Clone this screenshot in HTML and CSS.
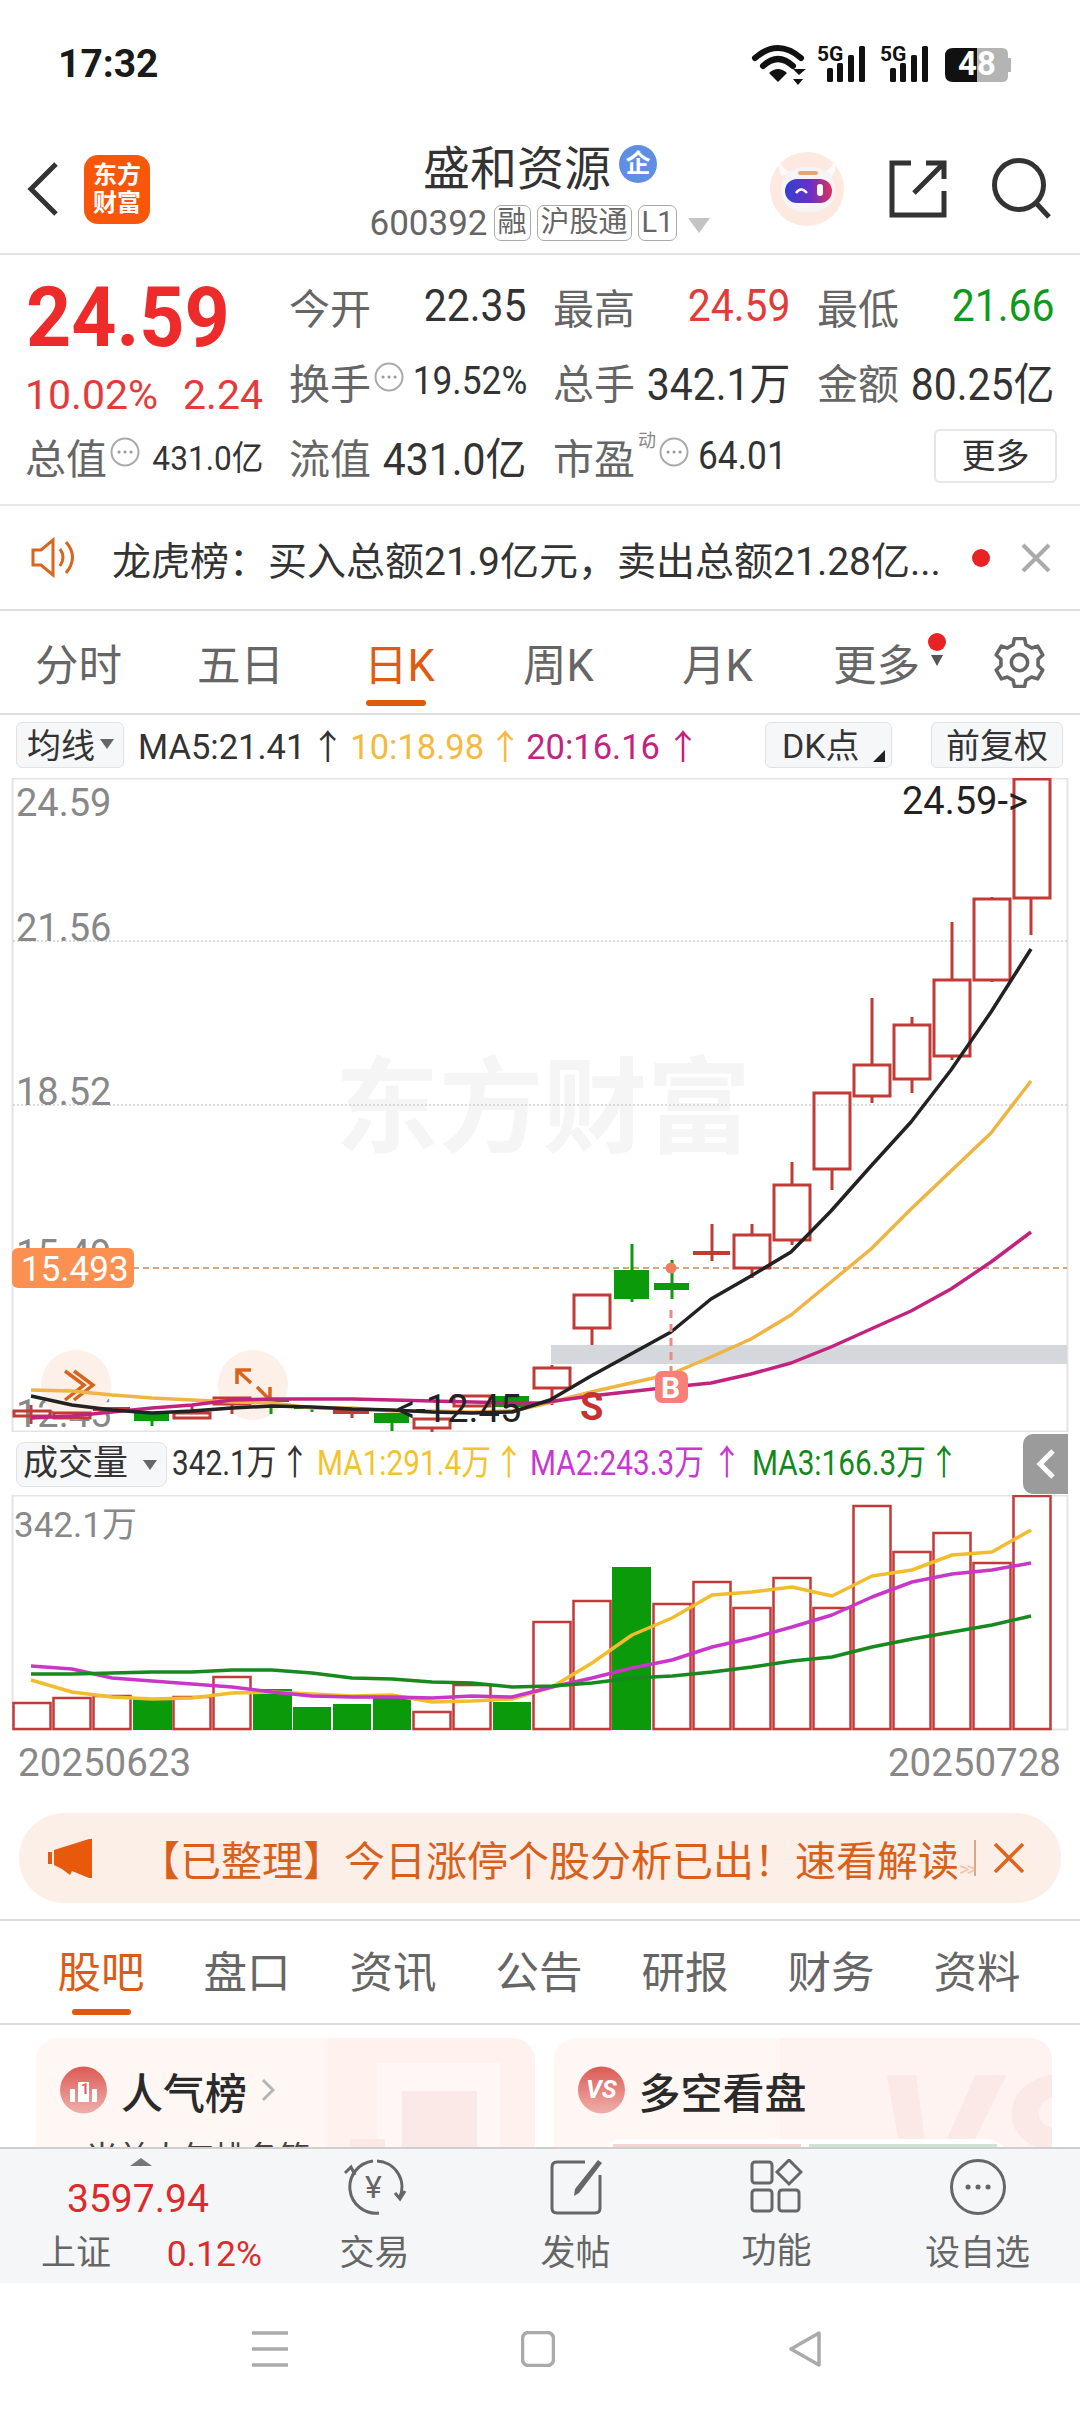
FILE: index.html
```html
<!DOCTYPE html>
<html lang="zh-CN">
<head>
<meta charset="UTF-8">
<meta name="viewport" content="width=device-width, initial-scale=1.0">
<title>盛和资源 600392</title>
<link rel="stylesheet" href="styles.css">
</head>
<body>

<!-- status bar -->
<div class="statusbar">
  <span class="clock">17:32</span>
  <svg class="status-icons" width="265" height="50" viewBox="750 40 265 50">
    <g class="wifi">
      <path d="M755 58 Q778 38 801 58"/>
      <path d="M763 66 Q778 52 793 66"/>
    </g>
    <path class="ink" d="M769 73 Q778 65 787 73 L778 82 Z"/>
    <path class="ink" d="M799 72 L806 66 L793 66 Z M793 76 H803 L798 82 Z" transform="translate(0 3)"/>
    <text class="five-g" x="817" y="61">5G</text>
    <rect class="ink" x="827" y="68" width="6" height="14" rx="1.5"/>
    <rect class="ink" x="837" y="63" width="6" height="19" rx="1.5"/>
    <rect class="ink" x="848" y="55" width="6" height="27" rx="1.5"/>
    <rect class="ink" x="859" y="46" width="6" height="36" rx="1.5"/>
    <text class="five-g" x="880" y="61">5G</text>
    <rect class="ink" x="890" y="68" width="6" height="14" rx="1.5"/>
    <rect class="ink" x="900" y="63" width="6" height="19" rx="1.5"/>
    <rect class="ink" x="911" y="55" width="6" height="27" rx="1.5"/>
    <rect class="ink" x="922" y="46" width="6" height="36" rx="1.5"/>
    <path class="ink" d="M977 48 H953 Q945 48 945 56 V74 Q945 82 953 82 H977 Z"/>
    <path class="batt-rest" d="M977 48 H1002 Q1008 48 1008 54 V58 H1011 V72 H1008 V76 Q1008 82 1002 82 H977 Z"/>
    <text class="batt-num" x="977" y="75">48</text>
  </svg>
</div>

<!-- stock title -->
<header class="head">
  <div class="head-left">
    <svg width="32" height="56" viewBox="0 0 32 56"><path class="stroke-dark" d="M29 3 L4 28 L29 53"/></svg>
    <div class="logo"><span>东方</span><span>财富</span></div>
  </div>
  <div class="head-mid">
    <div class="title">
      <span>盛和资源</span>
      <span class="badge-qi">企</span>
    </div>
    <div class="subtitle">
      <span class="code">600392</span>
      <span class="chip">融</span>
      <span class="chip">沪股通</span>
      <span class="chip">L1</span>
      <span class="tri-down"></span>
    </div>
  </div>
  <div class="head-right">
    <svg width="74" height="74" viewBox="0 0 74 74">
      <defs>
        <linearGradient id="visor" x1="0" x2="1" y1="0" y2="0">
          <stop offset="0" stop-color="#3440d0"/>
          <stop offset=".55" stop-color="#6a2fc8"/>
          <stop offset="1" stop-color="#e0305c"/>
        </linearGradient>
      </defs>
      <circle cx="37" cy="37" r="37" fill="#fde9df"/>
      <path d="M12 24 Q6 15 10 9 Q13 18 21 20 Z M62 24 Q68 15 64 9 Q61 18 53 20 Z" fill="#fbfbfb"/>
      <path d="M11 38 Q11 15 38 15 Q65 15 65 38 Q65 60 38 60 Q11 60 11 38 Z" fill="#f6f4f4"/>
      <rect x="28" y="19" width="20" height="4" rx="2" fill="#e3a677"/>
      <rect x="15" y="27" width="47" height="24" rx="12" fill="url(#visor)"/>
      <path d="M26 41 Q31 34 37 41" fill="none" stroke="#fff" stroke-width="2.5"/>
      <rect x="47" y="32" width="6" height="12" rx="3" fill="#fff"/>
    </svg>
    <svg width="60" height="60" viewBox="0 0 60 60">
      <path class="stroke-dark" d="M23 4 H4 V56 H56 V32"/>
      <path class="stroke-dark" d="M26 34 L55 5 M38 4 H56 V20"/>
    </svg>
    <svg width="60" height="62" viewBox="0 0 60 62">
      <circle class="stroke-dark" cx="27" cy="27" r="24.5"/>
      <path class="stroke-dark" d="M44 45 L57 59"/>
    </svg>
  </div>
</header>

<!-- quote numbers -->
<section class="quote">
  <div class="price">24.59</div>
  <div class="cell"><span class="lbl">今开</span><span class="val">22.35</span></div>
  <div class="cell"><span class="lbl">最高</span><span class="val red">24.59</span></div>
  <div class="cell"><span class="lbl">最低</span><span class="val green">21.66</span></div>

  <div class="change"><span>10.02%</span><span>2.24</span></div>
  <div class="cell">
    <span class="lbl-group"><span class="lbl">换手</span>
      <svg class="info" width="30" height="30" viewBox="0 0 30 30"><circle cx="15" cy="15" r="13.5"/><path d="M9 15h.1M15 15h.1M21 15h.1"/></svg></span>
    <span class="val mid">19.52%</span>
  </div>
  <div class="cell"><span class="lbl">总手</span><span class="val">342.1万</span></div>
  <div class="cell"><span class="lbl">金额</span><span class="val">80.25亿</span></div>

  <div class="cell">
    <span class="lbl-group"><span class="lbl">总值</span>
      <svg class="info" width="30" height="30" viewBox="0 0 30 30"><circle cx="15" cy="15" r="13.5"/><path d="M9 15h.1M15 15h.1M21 15h.1"/></svg></span>
    <span class="val small">431.0亿</span>
  </div>
  <div class="cell"><span class="lbl">流值</span><span class="val">431.0亿</span></div>
  <div class="cell pe">
    <span class="lbl-group"><span class="lbl">市盈</span><sup class="dyn">动</sup>
      <svg class="info" width="30" height="30" viewBox="0 0 30 30"><circle cx="15" cy="15" r="13.5"/><path d="M9 15h.1M15 15h.1M21 15h.1"/></svg></span>
    <span class="val mid">64.01</span>
  </div>
  <div class="cell end"><span class="more-btn">更多</span></div>
</section>

<!-- longhubang notice -->
<section class="notice">
  <svg width="48" height="41" viewBox="0 0 48 41">
    <path class="stroke-orange" d="M2 13 H10 L22 3 V38 L10 28 H2 Z"/>
    <path class="stroke-orange" d="M29 12 Q35 20 29 29 M35 5 Q48 20 35 36"/>
  </svg>
  <span class="notice-text">龙虎榜：买入总额21.9亿元，卖出总额21.28亿...</span>
  <span class="red-dot"></span>
  <svg class="notice-close" width="30" height="30" viewBox="0 0 30 30"><path class="stroke-grey" d="M2 2 L28 28 M28 2 L2 28"/></svg>
</section>

<!-- chart period tabs -->
<nav class="periods">
  <span class="period">分时</span>
  <span class="period">五日</span>
  <span class="period on">日K</span>
  <span class="period">周K</span>
  <span class="period">月K</span>
  <span class="period more">更多<i class="more-dot"></i><i class="more-tri"></i></span>
  <svg class="gear" width="51" height="51" viewBox="0 0 50 50">
    <path d="M20 1.5 L30 1.5 L31.3 7.6 L36.9 10.8 L42.8 8.9 L47.8 17.6 L43.2 21.8 L43.2 28.2 L47.8 32.4 L42.8 41.1 L36.9 39.2 L31.3 42.4 L30 48.5 L20 48.5 L18.7 42.4 L13.1 39.2 L7.2 41.1 L2.2 32.4 L6.8 28.2 L6.8 21.8 L2.2 17.6 L7.2 8.9 L13.1 10.8 L18.7 7.6 Z"/>
    <circle cx="25" cy="25" r="8"/>
  </svg>
</nav>

<!-- moving average legend -->
<div class="ma-row">
  <span class="pick pick-ma">均线<i class="pick-tri"></i></span>
  <span class="ma-item w-ma5">MA5:21.41</span><span class="arrow a-first">↑</span>
  <span class="ma-item c-yellow">10:18.98</span><span class="arrow a-second c-yellow">↑</span>
  <span class="ma-item c-pink">20:16.16</span><span class="arrow a-third c-pink">↑</span>
  <span class="pick pick-dk">DK点<i class="corner"></i></span>
  <span class="pick pick-fq">前复权</span>
</div>

<!-- k line chart, coordinates are page pixels -->
<svg class="chart" width="1080" height="654" viewBox="0 778 1080 654">
  <text class="watermark" x="335" y="1145">东方财富</text>
  <rect class="frame" x="12.5" y="778.5" width="1055" height="653"/>
  <path class="grid" d="M13 941 H1067 M13 1105 H1067"/>
  <path class="price-line" d="M13 1268 H1067"/>
  <rect class="band" x="551" y="1345" width="516" height="19"/>

  <text class="axis" x="16" y="816">24.59</text>
  <text class="axis" x="16" y="941">21.56</text>
  <text class="axis" x="16" y="1105">18.52</text>
  <text class="axis" x="16" y="1267">15.49</text>
  <text class="axis" x="16" y="1427">12.45</text>

  <circle class="tool-bg" cx="76" cy="1385" r="35"/>
  <circle class="tool-bg" cx="253" cy="1385" r="35"/>
  <path class="tool" d="M65 1371 L84 1385 L65 1400 M74 1371 L93 1385 L74 1400"/>
  <path class="tool" d="M237 1384 V1370 H251 M238 1371 L251 1383 M257 1387 L270 1400 M270 1387 V1400 H256"/>

  <!-- wicks -->
  <g class="wick-up">
    <path d="M31 1405 V1424"/>
    <path d="M192 1405 V1413"/>
    <path d="M232 1405 V1414"/>
    <path d="M352 1412 V1418"/>
    <path d="M432 1428 V1432"/>
    <path d="M552 1365 V1368 M552 1389 V1405"/>
    <path d="M592 1328 V1345"/>
    <path d="M712 1224 V1261"/>
    <path d="M752 1224 V1235 M752 1268 V1278"/>
    <path d="M792 1162 V1185 M792 1241 V1245"/>
    <path d="M832 1169 V1190"/>
    <path d="M872 998 V1065 M872 1096 V1103"/>
    <path d="M912 1017 V1025 M912 1079 V1093"/>
    <path d="M952 922 V980 M952 1056 V1060"/>
    <path d="M992 897 V899 M992 980 V982"/>
    <path d="M1031 898 V935"/>
  </g>
  <g class="wick-dn">
    <path d="M152 1421 V1426"/>
    <path d="M271 1400 V1414"/>
    <path d="M312 1407 V1412"/>
    <path d="M392 1423 V1431"/>
    <path d="M632 1244 V1270 M632 1299 V1302"/>
    <path d="M672 1260 V1299"/>
  </g>

  <!-- bodies -->
  <g class="up">
    <rect x="14" y="1411" width="36" height="5"/>
    <rect x="54" y="1413" width="36" height="5"/>
    <rect x="214" y="1398" width="36" height="6"/>
    <rect x="174" y="1413" width="36" height="5"/>
    <rect x="414" y="1419" width="36" height="9"/>
    <rect x="454" y="1396" width="36" height="10"/>
    <rect x="534" y="1368" width="36" height="20"/>
    <rect x="574" y="1295" width="36" height="33"/>
    <rect x="734" y="1235" width="36" height="33"/>
    <rect x="774" y="1185" width="36" height="55"/>
    <rect x="814" y="1093" width="36" height="76"/>
    <rect x="854" y="1065" width="36" height="31"/>
    <rect x="894" y="1025" width="36" height="54"/>
    <rect x="934" y="980" width="36" height="76"/>
    <rect x="974" y="899" width="36" height="81"/>
    <rect x="1014" y="779" width="36" height="119"/>
  </g>
  <g class="doji-up">
    <path d="M93 1409 H130"/>
    <path d="M333 1412 H369"/>
    <path d="M693 1253 H730"/>
  </g>
  <g class="dn">
    <rect x="134" y="1413" width="35" height="8"/>
    <rect x="374" y="1413" width="35" height="10"/>
    <rect x="492" y="1396" width="37" height="11"/>
    <rect x="614" y="1270" width="35" height="29"/>
    <rect x="654" y="1283" width="35" height="7"/>
    <rect x="255" y="1399" width="34" height="3"/>
    <rect x="294" y="1406" width="35" height="3"/>
  </g>

  <!-- moving averages -->
  <polyline class="ma c-ma10" points="31,1390 72,1391 112,1395 152,1398 192,1400 232,1402 272,1403 312,1408 352,1408 392,1411 432,1411 472,1412 512,1411 540,1405 591,1392 631,1383 671,1374 711,1357 751,1339 791,1315 831,1282 871,1249 911,1209 951,1171 991,1133 1031,1081"/>
  <polyline class="ma c-ma20" points="31,1418 72,1416 112,1412 152,1408 192,1405 232,1400 272,1399 312,1399 352,1399 392,1400 432,1401 472,1402 512,1403 540,1403 591,1396 671,1387 711,1383 751,1374 791,1363 831,1347 871,1329 911,1311 951,1289 991,1262 1031,1232"/>
  <polyline class="ma c-ma5" points="31,1396 72,1405 112,1410 152,1413 192,1411 232,1408 272,1406 312,1407 352,1409 392,1410 432,1412 472,1413 512,1412 550,1400 591,1376 631,1354 671,1332 711,1299 751,1276 791,1252 831,1211 871,1166 911,1122 951,1070 991,1012 1031,949"/>

  <text class="note" x="902" y="814">24.59-&gt;</text>
  <text class="note" x="396" y="1422">&lt;-12.45</text>

  <rect class="tag" x="12" y="1248" width="122" height="40" rx="6"/>
  <text class="tag-text" x="21" y="1281">15.493</text>

  <circle class="dot" cx="671" cy="1268" r="5.5"/>
  <path class="buy-line" d="M671 1310 V1371"/>
  <text class="sell" x="580" y="1420">S</text>
  <rect class="buy" x="655" y="1371" width="33" height="32" rx="7"/>
  <text class="buy-text" x="661" y="1398">B</text>
</svg>

<!-- volume legend -->
<div class="vol-row">
  <span class="pick pick-vol">成交量<i class="pick-tri"></i></span>
  <span class="squeeze w-a"><b>342.1万</b></span><span class="squeeze w-arrow-a"><b>↑</b></span>
  <span class="squeeze w-b c-y2"><b>MA1:291.4万</b></span><span class="squeeze w-arrow-b c-y2"><b>↑</b></span>
  <span class="squeeze w-c c-p2"><b>MA2:243.3万</b></span><span class="squeeze w-arrow-c c-p2"><b>↑</b></span>
  <span class="squeeze w-b c-g2"><b>MA3:166.3万</b></span><span class="squeeze w-arrow-b c-g2"><b>↑</b></span>
  <div class="collapse">
    <svg width="20" height="32" viewBox="0 0 20 32"><path d="M17 3 L4 16 L17 29"/></svg>
  </div>
</div>

<!-- volume chart -->
<svg class="chart" width="1080" height="236" viewBox="0 1495 1080 236">
  <rect class="frame" x="12.5" y="1495.5" width="1055" height="234"/>
  <text class="axis-vol" x="14" y="1537">342.1万</text>
  <g class="vol-up">
    <rect x="13.5" y="1703" width="37" height="26"/>
    <rect x="53.5" y="1698" width="37" height="31"/>
    <rect x="93.5" y="1696" width="37" height="33"/>
    <rect x="173.5" y="1697" width="37" height="32"/>
    <rect x="213.5" y="1677" width="37" height="52"/>
    <rect x="413.5" y="1712" width="37" height="17"/>
    <rect x="453.5" y="1685" width="37" height="44"/>
    <rect x="533.5" y="1622" width="37" height="107"/>
    <rect x="573.5" y="1601" width="37" height="128"/>
    <rect x="653.5" y="1604" width="37" height="125"/>
    <rect x="693.5" y="1582" width="37" height="147"/>
    <rect x="733.5" y="1608" width="37" height="121"/>
    <rect x="773.5" y="1578" width="37" height="151"/>
    <rect x="813.5" y="1608" width="37" height="121"/>
    <rect x="853.5" y="1506" width="37" height="223"/>
    <rect x="893.5" y="1552" width="37" height="177"/>
    <rect x="933.5" y="1533" width="37" height="196"/>
    <rect x="973.5" y="1563" width="37" height="166"/>
    <rect x="1013.5" y="1496" width="37" height="233"/>
  </g>
  <g class="vol-dn">
    <rect x="133" y="1699" width="39" height="31"/>
    <rect x="253" y="1689" width="39" height="41"/>
    <rect x="293" y="1707" width="38" height="23"/>
    <rect x="333" y="1704" width="38" height="26"/>
    <rect x="373" y="1698" width="38" height="32"/>
    <rect x="493" y="1702" width="38" height="28"/>
    <rect x="612" y="1567" width="39" height="163"/>
  </g>
  <polyline class="vma c-y2s" points="31,1680 72,1692 112,1697 152,1699 192,1698 232,1693 272,1692 312,1694 352,1696 392,1695 432,1702 472,1701 512,1699 552,1687 592,1663 632,1635 672,1618 712,1595 752,1592 792,1587 832,1596 872,1576 912,1570 952,1555 992,1552 1031,1530"/>
  <polyline class="vma c-p2s" points="31,1666 72,1669 112,1678 152,1681 192,1684 232,1687 272,1692 312,1696 352,1697 392,1697 432,1698 472,1696 512,1697 552,1687 592,1678 632,1668 672,1660 712,1647 752,1638 792,1627 832,1615 872,1597 912,1582 952,1574 992,1570 1031,1563"/>
  <polyline class="vma c-g2s" points="31,1674 72,1674 112,1673 152,1672 192,1672 232,1670 272,1670 312,1673 352,1678 392,1679 432,1682 472,1683 512,1687 552,1686 592,1683 632,1678 672,1676 712,1672 752,1667 792,1661 832,1657 872,1647 912,1639 952,1632 992,1625 1031,1616"/>
</svg>

<div class="dates"><span>20250623</span><span>20250728</span></div>

<!-- promo banner -->
<div class="promo">
  <svg width="45" height="39" viewBox="0 0 45 39">
    <path d="M0 13 H4 V25 H0 Z M6 11 L41 0 H44 V39 H41 L24 32 L22 36 L14 30 L6 26 Z"/>
  </svg>
  <span class="promo-text">【已整理】今日涨停个股分析已出！速看解读<i class="promo-fade">&gt;&gt;</i></span>
  <span class="promo-sep"></span>
  <svg class="promo-close" width="32" height="30" viewBox="0 0 32 30"><path d="M2 1 L30 29 M30 1 L2 29"/></svg>
</div>

<!-- content tabs -->
<nav class="subtabs">
  <span class="subtab on">股吧</span>
  <span class="subtab">盘口</span>
  <span class="subtab">资讯</span>
  <span class="subtab">公告</span>
  <span class="subtab">研报</span>
  <span class="subtab">财务</span>
  <span class="subtab">资料</span>
</nav>

<!-- cards, cut off by the toolbar -->
<section class="cards">
  <div class="card">
    <i class="deco deco-a"></i><i class="deco deco-b"></i><i class="deco deco-c"></i><i class="deco deco-d"></i>
    <div class="card-head">
      <svg width="47" height="48" viewBox="0 0 47 48">
        <defs>
          <linearGradient id="badge" x1="0" x2="0" y1="0" y2="1">
            <stop offset="0" stop-color="#db5a54"/>
            <stop offset="1" stop-color="#f0afab"/>
          </linearGradient>
        </defs>
        <circle cx="23.5" cy="24" r="23.5" fill="url(#badge)"/>
        <path d="M10 23 H15 V36 H10 Z M18 16 H29 V36 H18 Z M32 23 H37 V36 H32 Z" fill="#fff"/>
        <text class="medal" x="21" y="28">1</text>
      </svg>
      <span class="card-title">人气榜</span>
      <svg width="14" height="24" viewBox="0 0 14 24"><path class="chev" d="M2 2 L12 12 L2 22"/></svg>
    </div>
    <div class="card-sub">当前人气排名第一</div>
  </div>
  <div class="card">
    <i class="deco deco-a vs-a"></i><span class="vs-mark">VS</span>
    <div class="card-head">
      <svg width="47" height="48" viewBox="0 0 47 48">
        <circle cx="23.5" cy="24" r="23.5" fill="url(#badge)"/>
        <text class="vs-icon" x="8" y="32">VS</text>
      </svg>
      <span class="card-title">多空看盘</span>
    </div>
    <div class="versus"><i class="bar-red"></i><i class="bar-green"></i></div>
  </div>
</section>

<!-- bottom toolbar -->
<footer class="toolbar">
  <div class="index">
    <i class="index-tri"></i>
    <span class="index-val">3597.94</span>
    <div class="index-row"><span class="index-name">上证</span><span class="index-pct">0.12%</span></div>
  </div>
  <div class="tool-item">
    <svg width="64" height="56" viewBox="0 0 64 56">
      <path class="icon-line" d="M30 2 A26 26 0 0 0 36 54 M2 14 L8 8 L12 16"/>
      <path class="icon-line" d="M34 2 A26 26 0 0 1 56 40 M62 32 L57 40 L52 34"/>
      <text class="yen" x="22" y="39">¥</text>
    </svg>
    <span>交易</span>
  </div>
  <div class="tool-item">
    <svg width="54" height="56" viewBox="0 0 54 56">
      <path class="icon-line" d="M36 3 H8 Q3 3 3 8 V49 Q3 54 8 54 H46 Q51 54 51 49 V16"/>
      <path class="pencil" d="M49 1 L53 4 L30 34 L25 37 L26 30 Z"/>
    </svg>
    <span>发帖</span>
  </div>
  <div class="tool-item">
    <svg width="53" height="54" viewBox="0 0 53 54">
      <rect class="icon-line" x="2" y="3" width="20" height="21" rx="3"/>
      <path class="icon-line" d="M39 1 L51 13 L39 25 L27 13 Z"/>
      <rect class="icon-line" x="2" y="31" width="20" height="21" rx="3"/>
      <rect class="icon-line" x="29" y="31" width="20" height="21" rx="3"/>
    </svg>
    <span>功能</span>
  </div>
  <div class="tool-item">
    <svg width="56" height="56" viewBox="0 0 56 56">
      <circle class="icon-line" cx="28" cy="28" r="26.5"/>
      <path class="icon-dots" d="M18 28h.1M28 28h.1M38 28h.1"/>
    </svg>
    <span>设自选</span>
  </div>
</footer>

<!-- android nav -->
<div class="navbar">
  <svg width="36" height="36" viewBox="0 0 36 36"><path class="nav-line" d="M0 2 H36 M0 18 H36 M0 34 H36"/></svg>
  <svg width="34" height="36" viewBox="0 0 34 36"><rect class="nav-line" x="1.5" y="1.5" width="31" height="33" rx="6"/></svg>
  <svg width="34" height="36" viewBox="0 0 34 36"><path class="nav-line" d="M31 2 V34 L3 18 Z"/></svg>
</div>

</body>
</html>
```

FILE: styles.css
```css
* {
  box-sizing: border-box;
}

html, body {
  margin: 0;
  padding: 0;
}

body {
  width: 1080px;
  height: 2414px;
  overflow: hidden;
  background-color: #fff;
  color: #333;
  font-family: Roboto, "Noto Sans CJK SC", sans-serif;
}

i {
  font-style: normal;
}

svg {
  display: block;
  flex: none;
}

/* status bar */
.statusbar {
  height: 130px;
  display: flex;
  justify-content: space-between;
  align-items: flex-start;
  padding: 41px 65px 0 58px;
}

.status-icons {
  margin-top: -1px;
}

.clock {
  font-size: 39px;
  line-height: 46px;
  font-weight: 700;
  color: #1a1a1a;
}

.ink { fill: #111; }
.wifi path { fill: none; stroke: #111; stroke-width: 6; stroke-linecap: round; }
.five-g { font-size: 21px; font-weight: 700; fill: #111; }
.batt-rest { fill: #b4b4b4; }
.batt-num { font-size: 33px; font-weight: 700; fill: #fff; text-anchor: middle; }

/* head */
.head {
  height: 125px;
  display: grid;
  grid-template-columns: 1fr auto 1fr;
  border-bottom: 2px solid #e2e2e2;
}

.head-left,
.head-right {
  height: 118px;
  display: flex;
  align-items: center;
}

.head-left {
  padding-left: 27px;
  gap: 25px;
}

.head-right {
  justify-content: flex-end;
  padding-right: 28px;
  gap: 44px;
}

.stroke-dark {
  fill: none;
  stroke: #333;
  stroke-width: 5;
}

.logo {
  width: 66px;
  height: 69px;
  border-radius: 14px;
  background-color: #f8570b;
  color: #fff;
  font-size: 24px;
  line-height: 28px;
  font-weight: 700;
  display: flex;
  flex-direction: column;
  align-items: center;
  justify-content: center;
}

.title {
  display: flex;
  align-items: center;
  justify-content: center;
  gap: 8px;
  height: 68px;
  font-size: 47px;
  color: #333;
}

.badge-qi {
  width: 38px;
  height: 38px;
  border-radius: 50%;
  background-color: #5f8fe2;
  color: #fff;
  font-size: 25px;
  font-weight: 700;
  text-align: center;
  line-height: 38px;
}

.subtitle {
  display: flex;
  align-items: center;
  height: 36px;
  margin-top: 7px;
  color: #666;
}

.code {
  font-size: 35px;
  margin-right: 6px;
}

.chip {
  height: 36px;
  line-height: 32px;
  padding: 0 3px;
  margin-right: 6px;
  border: 1.5px solid #aaa;
  border-radius: 7px;
  font-size: 29px;
}

.tri-down {
  width: 0;
  height: 0;
  margin: 4px 0 0 5px;
  border-left: 11px solid transparent;
  border-right: 11px solid transparent;
  border-top: 15px solid #c4c4c4;
}

/* quote */
.quote {
  height: 251px;
  padding: 13px 26px 0;
  display: grid;
  grid-template-columns: repeat(4, 237px);
  grid-auto-rows: 75px;
  column-gap: 27px;
  border-bottom: 2px solid #e8e8e8;
}

.price {
  font-size: 83px;
  line-height: 64px;
  margin-top: 18px;
  font-weight: 700;
  color: #ee2b2b;
  transform: scaleX(.95);
  transform-origin: left center;
  white-space: nowrap;
}

.change {
  display: flex;
  justify-content: space-between;
  font-size: 41px;
  line-height: 50px;
  margin-top: 27px;
  margin-left: -1px;
  color: #e63a3a;
}

.cell {
  display: flex;
  align-items: center;
  justify-content: space-between;
}

.cell.pe {
  justify-content: flex-start;
}

.cell.end {
  justify-content: flex-end;
}

.pe .lbl-group {
  margin-right: 9px;
}

.lbl-group {
  display: flex;
  flex: none;
  align-items: center;
}

.lbl {
  flex: none;
  margin-left: -1px;
  font-size: 41px;
  white-space: nowrap;
  color: #666;
}

.val {
  flex: none;
  font-size: 44px;
  color: #333;
  white-space: nowrap;
  transform: scaleX(.93);
  transform-origin: right center;
}

.val.mid { font-size: 38px; }
.val.small { font-size: 34px; }
.pe .val { transform-origin: left center; }
.red { color: #e33a3a; }
.green { color: #0e9a1a; }

.info {
  margin: -8px 0 0 3px;
}

.info circle {
  fill: none;
  stroke: #aaa;
  stroke-width: 2;
}

.info path {
  fill: none;
  stroke: #999;
  stroke-width: 3;
  stroke-linecap: round;
}

.dyn {
  font-size: 18px;
  line-height: 18px;
  color: #888;
  margin: -30px 0 0 3px;
}

.more-btn {
  width: 123px;
  height: 54px;
  margin-right: -2px;
  border: 2px solid #e6e6e6;
  border-radius: 6px;
  font-size: 34px;
  line-height: 50px;
  text-align: center;
  color: #333;
}

/* notice */
.notice {
  height: 105px;
  display: flex;
  align-items: center;
  padding-left: 31px;
  border-bottom: 2px solid #dedede;
}

.stroke-orange {
  fill: none;
  stroke: #d9651f;
  stroke-width: 3;
}

.stroke-grey {
  fill: none;
  stroke: #aaa;
  stroke-width: 4;
}

.notice-text {
  width: 860px;
  margin-left: 33px;
  font-size: 39px;
  white-space: nowrap;
  overflow: hidden;
  color: #333;
}

.red-dot {
  width: 18px;
  height: 18px;
  border-radius: 50%;
  background-color: #e82323;
}

.notice-close {
  margin-left: 31px;
}

/* period tabs */
.periods {
  height: 104px;
  position: relative;
  display: flex;
  align-items: center;
  padding-left: 2px;
  border-bottom: 2px solid #dedede;
}

.period {
  width: 159px;
  text-align: center;
  font-size: 43.5px;
  color: #666;
  position: relative;
}

.period:first-child {
  margin-left: -3px;
  margin-right: 3px;
}

.period.on {
  color: #dd5c14;
}

.period.on::after {
  content: "";
  position: absolute;
  left: 46px;
  bottom: -12px;
  width: 60px;
  height: 6px;
  border-radius: 3px;
  background-color: #e0590c;
}

.more-dot {
  position: absolute;
  top: 2px;
  right: 10px;
  width: 18px;
  height: 18px;
  border-radius: 50%;
  background-color: #e82323;
}

.more-tri {
  position: absolute;
  top: 24px;
  right: 13px;
  width: 0;
  height: 0;
  border-left: 6px solid transparent;
  border-right: 6px solid transparent;
  border-top: 11px solid #555;
}

.gear {
  margin-left: 38px;
}

.gear path,
.gear circle {
  fill: none;
  stroke: #666;
  stroke-width: 3.5;
  stroke-linejoin: round;
}

/* ma legend */
.ma-row {
  height: 63px;
  padding-top: 7px;
  display: flex;
  align-items: flex-start;
  font-size: 34.5px;
  line-height: 50px;
}

.pick {
  position: relative;
  height: 46px;
  border: 1.5px solid #e2e2e2;
  border-radius: 6px;
  background-color: #f6f7f9;
  color: #333;
  font-size: 34px;
  line-height: 46px;
  white-space: nowrap;
}

.pick-ma {
  width: 108px;
  margin-left: 16px;
  padding-left: 10px;
}

.pick-dk {
  width: 127px;
  margin-left: 59px;
  padding-left: 16px;
}

.pick-fq {
  width: 132px;
  margin-left: 39px;
  padding-left: 14px;
}

.pick-tri {
  position: absolute;
  right: 9px;
  top: 16px;
  width: 0;
  height: 0;
  border-left: 7px solid transparent;
  border-right: 7px solid transparent;
  border-top: 10px solid #666;
}

.corner {
  position: absolute;
  right: 6px;
  bottom: 5px;
  width: 0;
  height: 0;
  border-left: 12px solid transparent;
  border-bottom: 12px solid #222;
}

.ma-item {
  white-space: nowrap;
}

.w-ma5 {
  margin-left: 14px;
}

.arrow {
  text-align: center;
}

.a-first {
  width: 45px;
}

.a-second {
  width: 42px;
}

.a-third {
  width: 46px;
}

.c-yellow { color: #f4b93f; }
.c-pink { color: #c2237f; }

/* charts */
.chart {
  display: block;
}

.watermark {
  font-size: 104px;
  font-weight: 700;
  fill: #f5f5f5;
  font-family: "Noto Sans CJK SC", sans-serif;
}

.frame {
  fill: none;
  stroke: #e4e4e4;
  stroke-width: 2;
}

.grid {
  fill: none;
  stroke: #cfcfcf;
  stroke-width: 1.5;
  stroke-dasharray: 2 2;
}

.price-line {
  fill: none;
  stroke: #dba57c;
  stroke-width: 2;
  stroke-dasharray: 6 4;
}

.band { fill: #d4d7db; }
.axis { font-size: 38px; fill: #888; }
.note { font-size: 38px; fill: #222; }

.tool-bg { fill: #fdf0e8; }

.tool {
  fill: none;
  stroke: #d8641c;
  stroke-width: 3.5;
}

.wick-up path {
  fill: none;
  stroke: #c23a36;
  stroke-width: 3;
}

.wick-dn path {
  fill: none;
  stroke: #0a9a0a;
  stroke-width: 3;
}

.up rect {
  fill: none;
  stroke: #c23a36;
  stroke-width: 3;
}

.doji-up path {
  fill: none;
  stroke: #c23a36;
  stroke-width: 4;
}

.dn rect { fill: #0a9a0a; }

.ma {
  fill: none;
  stroke-width: 3.5;
  stroke-linejoin: round;
}

.c-ma5 { stroke: #222; }
.c-ma10 { stroke: #eeb444; }
.c-ma20 { stroke: #c2237f; }

.tag { fill: #fb9050; }
.tag-text { font-size: 35px; fill: #fff; }
.dot { fill: #ee7f5c; }

.buy-line {
  fill: none;
  stroke: #ee8a82;
  stroke-width: 3;
  stroke-dasharray: 8 6;
}

.sell { font-size: 38px; font-weight: 700; fill: #c93030; }
.buy { fill: #f98078; }
.buy-text { font-size: 30px; font-weight: 700; fill: #fff; }

/* volume legend */
.vol-row {
  position: relative;
  height: 63px;
  padding-top: 10px;
  display: flex;
  align-items: flex-start;
  line-height: 44px;
}

.pick-vol {
  width: 151px;
  height: 45px;
  margin-left: 16px;
  margin-right: 5px;
  padding-left: 6px;
  font-size: 35px;
  line-height: 41px;
  border-radius: 8px;
}

.vol-row .pick-tri {
  right: 9px;
  top: 17px;
}

.squeeze {
  display: block;
  font-size: 35px;
  height: 44px;
}

.squeeze b {
  display: block;
  font-weight: 400;
  white-space: nowrap;
  transform: scaleX(.85);
  transform-origin: left center;
}

.w-a { width: 108px; }
.w-b { width: 176.5px; }
.w-c { width: 181.5px; }
.w-arrow-a { width: 37px; }
.w-arrow-b { width: 36.5px; }
.w-arrow-c { width: 40.5px; }

.c-y2 { color: #f2c32c; }
.c-p2 { color: #c837d0; }
.c-g2 { color: #12881c; }

.collapse {
  position: absolute;
  top: 2px;
  right: 12px;
  width: 45px;
  height: 60px;
  border-radius: 10px 0 0 10px;
  background-color: #9b9b9b;
  display: flex;
  align-items: center;
  justify-content: center;
}

.collapse path {
  fill: none;
  stroke: #fff;
  stroke-width: 5;
}

.axis-vol { font-size: 35px; fill: #888; }
.vol-up rect { fill: #fff; stroke: #c23a3a; stroke-width: 2.5; }
.vol-dn rect { fill: #0a9a0a; }

.vma {
  fill: none;
  stroke-width: 3.5;
  stroke-linejoin: round;
}

.c-y2s { stroke: #f2bd2c; }
.c-p2s { stroke: #c837c8; }
.c-g2s { stroke: #17891f; }

.dates {
  height: 64px;
  margin-bottom: 18px;
  padding: 0 19px 0 18px;
  display: flex;
  justify-content: space-between;
  font-size: 38.5px;
  line-height: 64px;
  color: #888;
}

/* promo */
.promo {
  width: 1042px;
  height: 90px;
  margin-left: 19px;
  padding-left: 29px;
  display: flex;
  align-items: center;
  border-radius: 45px;
  background-color: #fcefe7;
}

.promo svg path {
  fill: #e8590c;
}

.promo-text {
  width: 835px;
  margin-left: 46px;
  font-size: 41px;
  color: #d9601b;
  white-space: nowrap;
  overflow: hidden;
}

.promo-fade {
  font-size: 20px;
  letter-spacing: -3px;
  color: #f2c4aa;
}

.promo-sep {
  width: 1.5px;
  height: 36px;
  background-color: #d9a98d;
}

.promo-close {
  margin-left: 17px;
}

.promo .promo-close path {
  fill: none;
  stroke: #e0641c;
  stroke-width: 3.5;
}

/* content tabs */
.subtabs {
  height: 106px;
  margin-top: 16px;
  padding-left: 28px;
  display: flex;
  align-items: center;
  border-top: 2px solid #dedede;
  border-bottom: 2px solid #dedede;
}

.subtab {
  position: relative;
  width: 146px;
  text-align: center;
  font-size: 43.5px;
  line-height: 62px;
  margin-top: 3px;
  color: #666;
}

.subtab.on {
  color: #dd5c14;
}

.subtab.on::after {
  content: "";
  position: absolute;
  left: 44px;
  bottom: -10px;
  width: 59px;
  height: 6px;
  border-radius: 3px;
  background-color: #e0590c;
}

/* cards */
.cards {
  height: 122px;
  overflow: hidden;
  padding: 13px 28px 0 36px;
  display: flex;
  gap: 19px;
}

.card {
  position: relative;
  flex: 1;
  height: 300px;
  padding: 28px 24px 0;
  border-radius: 22px;
  overflow: hidden;
  background-color: #fef7f4;
}

.card-head {
  position: relative;
  height: 48px;
  display: flex;
  align-items: center;
  gap: 14px;
}

.card-title {
  font-size: 42px;
  font-weight: 500;
  color: #2a2a2a;
}

.chev {
  fill: none;
  stroke: #b5b5b5;
  stroke-width: 3;
}

.medal {
  font-size: 14px;
  font-weight: 700;
  fill: #d9605b;
}

.vs-icon {
  font-size: 25px;
  font-weight: 700;
  font-style: italic;
  fill: #fff;
}

.card-sub {
  position: relative;
  margin: 22px 0 0 26px;
  font-size: 32px;
  line-height: 44px;
  color: #444;
  white-space: nowrap;
}

.deco {
  position: absolute;
}

.deco-a {
  left: 291px;
  right: 0;
  top: 0;
  bottom: 0;
  background-color: #fef1ee;
}

.deco-b {
  left: 341px;
  width: 123px;
  top: 25px;
  bottom: 0;
  background-color: #fef7f5;
}

.deco-c {
  left: 366px;
  width: 75px;
  top: 53px;
  bottom: 0;
  background-color: #fae9e6;
}

.deco-d {
  left: 314px;
  width: 35px;
  top: 101px;
  bottom: 0;
  background-color: #fbe9e6;
}

.vs-a {
  left: 226px;
  background-color: #fef3f0;
}

.vs-mark {
  position: absolute;
  left: 320px;
  top: 13px;
  font-size: 190px;
  line-height: 190px;
  font-weight: 700;
  font-style: italic;
  color: #fae9e6;
}

.versus {
  position: absolute;
  left: 49px;
  top: 101px;
  width: 404px;
  height: 80px;
  padding: 5px 10px;
  display: flex;
  gap: 8px;
  border-radius: 20px;
  background-color: #fff;
}

.bar-red {
  flex: 1;
  background-color: #f3d5d3;
}

.bar-green {
  flex: 1;
  background-color: #cfe5d3;
}

/* toolbar */
.toolbar {
  height: 136px;
  position: relative;
  display: flex;
  border-top: 2px solid #cfcfcf;
  background-color: #f5f6f8;
}

.index {
  width: 274px;
  padding: 9px 0 0 41px;
  display: flex;
  flex-direction: column;
}

.index-tri {
  width: 0;
  height: 0;
  align-self: center;
  margin-left: -34px;
  border-left: 11px solid transparent;
  border-right: 11px solid transparent;
  border-bottom: 8px solid #777;
}

.index-val {
  margin: 10px 0 0 26px;
  font-size: 39px;
  line-height: 46px;
  color: #dc2b2b;
}

.index-row {
  display: flex;
  align-items: center;
  justify-content: space-between;
  margin-top: 7px;
  width: 221px;
  line-height: 50px;
}

.index-name {
  font-size: 35px;
  color: #666;
}

.index-pct {
  font-size: 35.5px;
  color: #dc2b2b;
}

.tool-item {
  width: 201px;
  padding-top: 10px;
  display: flex;
  flex-direction: column;
  align-items: center;
  font-size: 35px;
  line-height: 46px;
  color: #666;
}

.tool-item span {
  margin-top: 16px;
}

.icon-line {
  fill: none;
  stroke: #666;
  stroke-width: 3;
}

.icon-dots {
  fill: none;
  stroke: #666;
  stroke-width: 5;
  stroke-linecap: round;
}

.pencil { fill: #666; }
.yen { font-size: 32px; fill: #666; }

/* android nav */
.navbar {
  height: 132px;
  display: flex;
  align-items: center;
  justify-content: center;
  padding-right: 6px;
  gap: 233px;
}

.nav-line {
  fill: none;
  stroke: #aaa;
  stroke-width: 3.5;
  stroke-linejoin: round;
}
```
